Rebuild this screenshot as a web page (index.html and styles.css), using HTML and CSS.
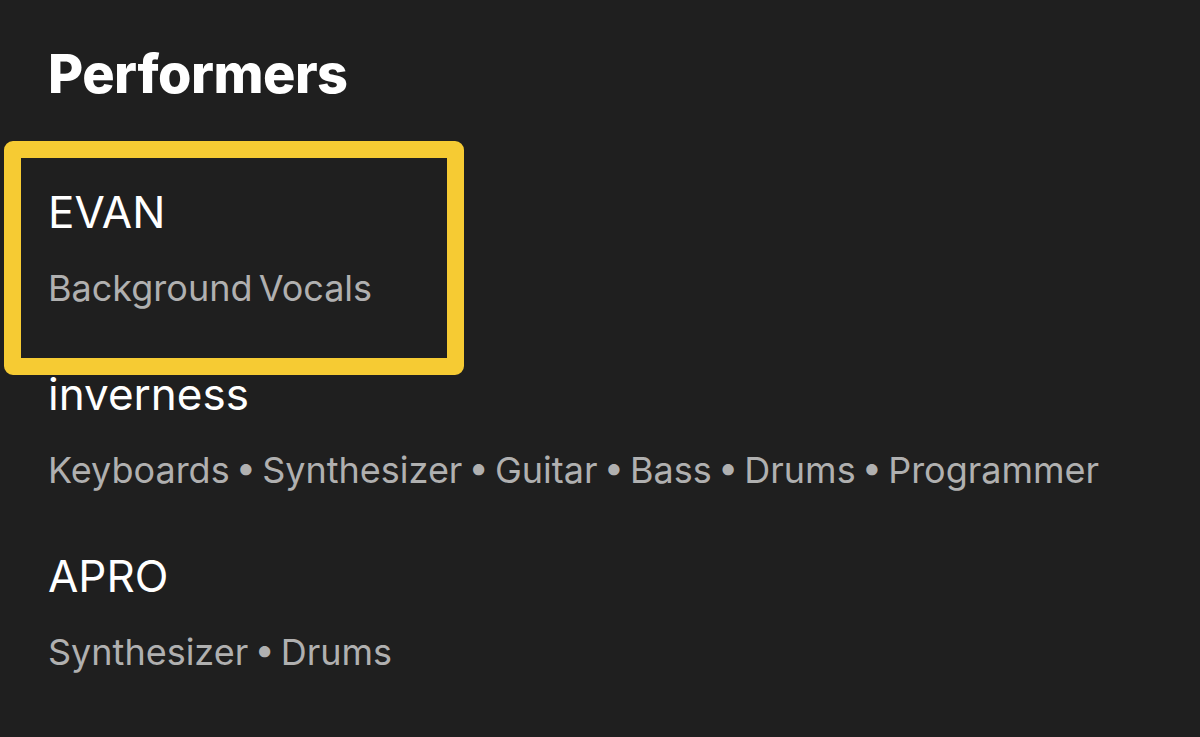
FILE: index.html
```html
<!DOCTYPE html>
<html lang="en">
<head>
<meta charset="utf-8">
<title>Performers</title>
<link rel="stylesheet" href="styles.css">
</head>
<body>
<main class="credits">
  <h1 class="credits-title">Performers</h1>
  <ul class="performer-list">
    <li class="performer performer--highlight">
      <div class="performer-name">EVAN</div>
      <div class="performer-roles">Background Vocals</div>
    </li>
    <li class="performer">
      <div class="performer-name">inverness</div>
      <div class="performer-roles">Keyboards • Synthesizer • Guitar • Bass • Drums • Programmer</div>
    </li>
    <li class="performer">
      <div class="performer-name">APRO</div>
      <div class="performer-roles">Synthesizer • Drums</div>
    </li>
  </ul>
</main>
</body>
</html>
```

FILE: styles.css
```css
html, body {
  margin: 0;
  padding: 0;
  background: #1f1f1f;
  height: 100%;
}

body {
  font-family: "Inter", "Liberation Sans", sans-serif;
  color: #ffffff;
}

.credits {
  padding: 40px 48px 0;
}

.credits-title {
  margin: 0;
  font-size: 54px;
  font-weight: 800;
  line-height: 68px;
  letter-spacing: -0.5px;
}

.performer-list {
  list-style: none;
  margin: 0;
  padding: 0;
  display: flex;
  flex-direction: column;
}

.performer {
  position: relative;
  display: flex;
  flex-direction: column;
  height: 182px;
  padding-top: 76px;
  box-sizing: border-box;
}

.performer-name {
  font-size: 44px;
  line-height: 56px;
  font-weight: 400;
}

.performer-roles {
  margin-top: 26px;
  font-size: 36px;
  line-height: 44px;
  color: #b0b0b0;
  word-spacing: -4px;
}

/* yellow focus frame drawn around the first credit */
.performer--highlight::after {
  content: "";
  position: absolute;
  left: -44px;
  top: 33px;
  width: 460px;
  height: 234px;
  box-sizing: border-box;
  border: 17px solid #f6cb33;
  border-radius: 9px;
  pointer-events: none;
}
```
